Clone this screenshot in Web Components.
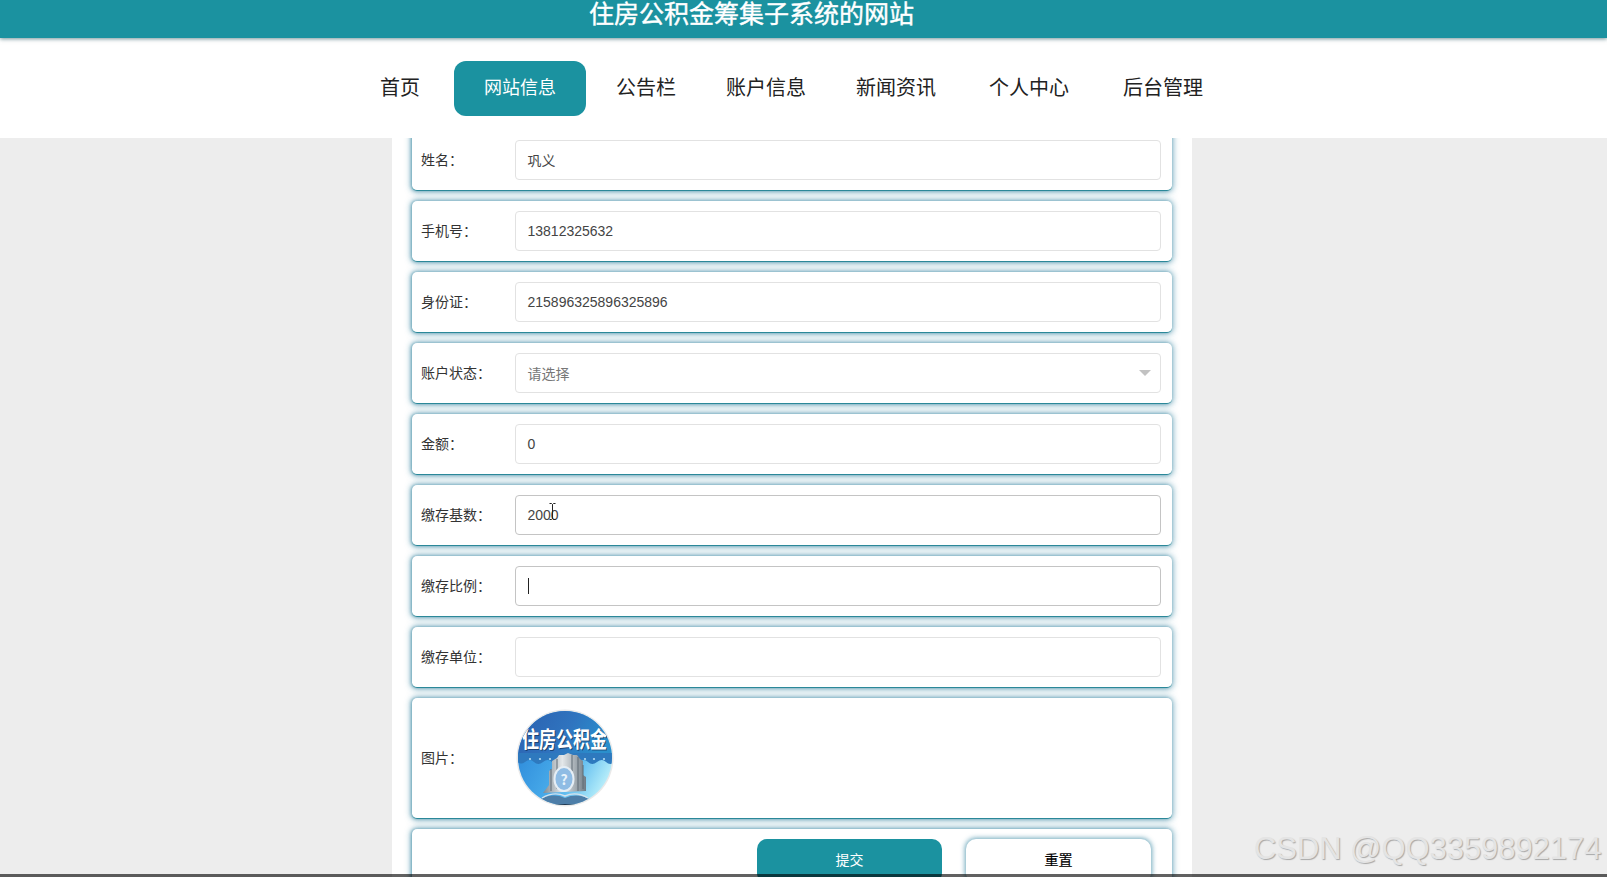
<!DOCTYPE html>
<html lang="zh-CN">
<head>
<meta charset="utf-8">
<title>住房公积金筹集子系统的网站</title>
<style>
html, body { margin: 0; height: 877px; overflow: hidden; background: #ededed; }
body { font-family: "Liberation Sans", "Noto Sans CJK SC", sans-serif; display: flex; flex-direction: column; position: relative; }
</style>
</head>
<body>
<site-header>住房公积金筹集子系统的网站</site-header>
<site-nav>
  <nav-item>首页</nav-item>
  <nav-item active style="--ml:9px">网站信息</nav-item>
  <nav-item style="--ml:4px">公告栏</nav-item>
  <nav-item>账户信息</nav-item>
  <nav-item>新闻资讯</nav-item>
  <nav-item style="--ml:3px">个人中心</nav-item>
  <nav-item style="--ml:4px">后台管理</nav-item>
</site-nav>
<form-panel>
  <form-row label="姓名："><text-box>巩义</text-box></form-row>
  <form-row label="手机号："><text-box>13812325632</text-box></form-row>
  <form-row label="身份证："><text-box>215896325896325896</text-box></form-row>
  <form-row label="账户状态："><text-box select placeholder>请选择</text-box></form-row>
  <form-row label="金额："><text-box>0</text-box></form-row>
  <form-row label="缴存基数："><text-box hover>2000</text-box></form-row>
  <form-row label="缴存比例："><text-box focused></text-box></form-row>
  <form-row label="缴存单位："><text-box></text-box></form-row>
  <form-row label="图片：" tall><logo-pic></logo-pic></form-row>
  <form-row actions>
    <form-btn primary>提交</form-btn>
    <form-btn>重置</form-btn>
  </form-row>
</form-panel>
<water-mark>CSDN @QQ3359892174</water-mark>
<bottom-edge></bottom-edge>

<script>
const TEAL = '#1b92a0';

class SiteHeader extends HTMLElement {
  constructor() {
    super();
    this.attachShadow({ mode: 'open' }).innerHTML = `
<style>
:host { display: block; flex: none; height: 38px; background: ${TEAL}; color: #fff; position: relative; z-index: 3;
  box-shadow: 0 1px 4px rgba(0,60,70,.55); box-sizing: border-box; padding-left: 589px;
  font-size: 25px; line-height: 29px; white-space: nowrap; -webkit-text-stroke: .4px #fff; }
</style><slot></slot>`;
  }
}
customElements.define('site-header', SiteHeader);

class SiteNav extends HTMLElement {
  constructor() {
    super();
    this.attachShadow({ mode: 'open' }).innerHTML = `
<style>
:host { display: flex; flex: none; height: 100px; background: #fff; position: relative; z-index: 2;
  box-sizing: border-box; padding: 23px 0 0 355px; align-items: flex-start; }
</style><slot></slot>`;
  }
}
customElements.define('site-nav', SiteNav);

class NavItem extends HTMLElement {
  constructor() {
    super();
    this.attachShadow({ mode: 'open' }).innerHTML = `
<style>
:host { display: block; margin-left: var(--ml, 0); padding: 0 25px; height: 55px; line-height: 54px;
  font-size: 20px; color: #222; white-space: nowrap; border-radius: 12px; }
:host([active]) { background: ${TEAL}; color: #fff; font-size: 18px; padding: 0 30px; line-height: 55px; margin-right: 1px; }
</style><slot></slot>`;
  }
}
customElements.define('nav-item', NavItem);

class FormPanel extends HTMLElement {
  constructor() {
    super();
    this.attachShadow({ mode: 'open' }).innerHTML = `
<style>
:host { display: block; flex: 1; min-height: 0; overflow: hidden; }
.col { width: 800px; margin: -8px 0 0 392px; background: #fff; padding: 0 20px; box-sizing: border-box;
  display: flex; flex-direction: column; gap: 10px; height: 900px; }
</style><div class="col"><slot></slot></div>`;
  }
}
customElements.define('form-panel', FormPanel);

class FormRow extends HTMLElement {
  constructor() {
    super();
    this.attachShadow({ mode: 'open' }).innerHTML = `
<style>
:host { display: flex; flex: none; align-items: center; box-sizing: border-box; height: 61px; padding: 0 11px 1px 9px;
  background: #fff; border-radius: 5px; border-bottom: 1px solid #2b8899;
  box-shadow: 0 0 6px 1px rgba(30,120,150,.62), -1px 0 3px rgba(30,120,150,.4); }
:host([tall]) { height: 121px; }
:host([actions]) { height: 70px; align-items: flex-start; justify-content: flex-end; padding: 10px 21px 0 0; gap: 24px; border-bottom: 0; }
.label { width: 94px; flex: none; font-size: 14px; line-height: 20px; color: #333; white-space: nowrap; }
:host([actions]) .label { display: none; }
</style><span class="label"></span><slot></slot>`;
    this.shadowRoot.querySelector('.label').textContent = this.getAttribute('label') || '';
  }
}
customElements.define('form-row', FormRow);

class TextBox extends HTMLElement {
  constructor() {
    super();
    this.attachShadow({ mode: 'open' }).innerHTML = `
<style>
:host { display: flex; flex: 1; align-items: center; position: relative; box-sizing: border-box; height: 40px; padding-left: 11.5px;
  background: #fff; border: 1px solid #e2e2e2; border-radius: 4px; font-size: 14px; color: #444; }
:host([hover]), :host([focused]) { border-color: #c4c4c4; }
:host([placeholder]) { color: #777; }
.caret { display: none; width: 1px; height: 16px; background: #222; }
:host([focused]) .caret { display: block; }
.arrow { display: none; position: absolute; right: 9px; top: 16px; width: 0; height: 0;
  border: 6px solid transparent; border-top-color: #c2c2c2; border-bottom: 0; }
:host([select]) .arrow { display: block; }
.beam { position: absolute; left: 32px; top: 7px; display: none; }
:host([hover]) .beam { display: block; }
</style><slot></slot><span class="caret"></span><span class="arrow"></span>
<svg class="beam" width="9" height="17" viewBox="0 0 9 17" fill="none" stroke="#222" stroke-width="1"><path d="M1.5 .5h2l1 1 1-1h2M4.5 1.5v14M1.5 16.5h2l1-1 1 1h2"/></svg>`;
  }
}
customElements.define('text-box', TextBox);

class LogoPic extends HTMLElement {
  constructor() {
    super();
    this.attachShadow({ mode: 'open' }).innerHTML = `
<style>
:host { display: block; width: 98px; height: 98px; margin-left: 1px; }
svg { display: block; }
text { font-family: "Noto Sans CJK SC", sans-serif; }
</style>
<svg width="98" height="98" viewBox="0 0 98 98">
  <defs>
    <linearGradient id="top" x1="0" y1="0" x2="1" y2="0.3"><stop offset="0" stop-color="#2b5fae"/><stop offset=".6" stop-color="#2f74bf"/><stop offset="1" stop-color="#2a8fcc"/></linearGradient>
    <linearGradient id="low" x1="0" y1=".3" x2="1" y2=".85"><stop offset="0" stop-color="#2a86d8"/><stop offset=".55" stop-color="#4cb0ec"/><stop offset=".85" stop-color="#a8e6f8"/><stop offset="1" stop-color="#e6fbfd"/></linearGradient>
    <linearGradient id="bld" x1="0" y1="0" x2="1" y2="0"><stop offset="0" stop-color="#7f8a93"/><stop offset=".45" stop-color="#e4e8ea"/><stop offset="1" stop-color="#6f7b85"/></linearGradient>
    <filter id="soft" x="-5%" y="-5%" width="110%" height="110%"><feGaussianBlur stdDeviation=".45"/></filter>
    <clipPath id="c"><circle cx="49" cy="49" r="47"/></clipPath>
  </defs>
  <circle cx="49" cy="49" r="48.5" fill="#e9e9e9"/>
  <g clip-path="url(#c)">
    <rect width="98" height="98" fill="url(#low)"/>
    <rect width="98" height="50" fill="url(#top)"/>
    <g filter="url(#soft)">
      <path d="M0 51q4 6 9 2t9 0 9 0 9 0 9 0 9 0 9 0 9 0 9 0 9 0 9 0V44H0z" fill="#2e79be"/>
      <g fill="#b5dcf2"><circle cx="14" cy="50" r="1.1"/><circle cx="24" cy="50" r="1.1"/><circle cx="34" cy="50" r="1.1"/><circle cx="69" cy="50" r="1.1"/><circle cx="78" cy="50" r="1.1"/><circle cx="88" cy="50" r="1.1"/></g>
      <path d="M27 84l6-8V62l3-2V52l5-3 2-3h5l4-2 5 2h4l3 4 3 2v14l3 2v14z" fill="url(#bld)"/>
      <path d="M35 60v22M41 50v30M56 46v16M62 48v34M67 56v24" stroke="#5e6a74" stroke-width="1"/>
      <ellipse cx="48" cy="70" rx="10.5" ry="13" fill="#e6eef5"/>
      <ellipse cx="48" cy="70" rx="8.5" ry="11" fill="#8fbce4"/>
      <path d="M22 92q13-9 27-3q14-6 27 3v6H22z" fill="#4e7ea8"/>
      <path d="M26 89q12-7 23-2q11-5 23 2" fill="none" stroke="#d6e2ec" stroke-width="1.4"/>
      <path d="M20 95h58v4H20z" fill="#24384f"/>
    </g>
    <text x="48" y="76" font-size="14" font-weight="700" fill="#e8f3fb" text-anchor="middle">?</text>
    <g transform="translate(6 38) scale(1 1.3)">
      <text x="1" y="1" font-size="17" font-weight="700" fill="#17365f" opacity=".75">住房公积金</text>
      <text font-size="17" font-weight="700" fill="#fff">住房公积金</text>
    </g>
  </g>
</svg>`;
  }
}
customElements.define('logo-pic', LogoPic);

class FormBtn extends HTMLElement {
  constructor() {
    super();
    this.attachShadow({ mode: 'open' }).innerHTML = `
<style>
:host { display: flex; align-items: flex-start; justify-content: center; flex: none; width: 185px; height: 44px; box-sizing: border-box;
  font-size: 14px; line-height: 43px; border-radius: 10px; color: #000; background: #fff; box-shadow: 0 0 5px 1px rgba(30,120,150,.65); -webkit-text-stroke: .2px #000; }
:host([primary]) { background: ${TEAL}; color: #fff; box-shadow: none; -webkit-text-stroke: 0; }
</style><slot></slot>`;
  }
}
customElements.define('form-btn', FormBtn);

class WaterMark extends HTMLElement {
  constructor() {
    super();
    this.attachShadow({ mode: 'open' }).innerHTML = `
<style>
:host { position: absolute; left: 1254px; top: 831px; z-index: 4; font-size: 30.9px; line-height: 36px; white-space: nowrap;
  color: #e4e4e4; text-shadow: 1px 1px 1px #a8a8a8; }
</style><slot></slot>`;
  }
}
customElements.define('water-mark', WaterMark);

class BottomEdge extends HTMLElement {
  constructor() {
    super();
    this.attachShadow({ mode: 'open' }).innerHTML = `
<style>
:host { position: absolute; left: 0; right: 0; top: 874px; height: 3px; background: rgba(0,0,0,.62); z-index: 5; }
</style>`;
  }
}
customElements.define('bottom-edge', BottomEdge);
</script>
</body>
</html>
